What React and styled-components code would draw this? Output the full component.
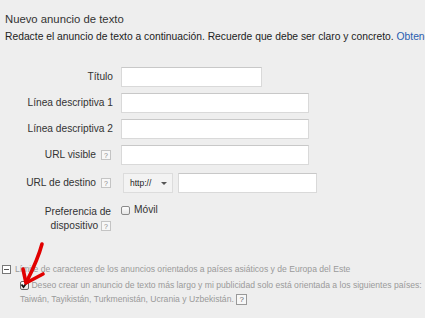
import styled, { createGlobalStyle } from "styled-components";

const GlobalStyle = createGlobalStyle`
  html, body {
    margin: 0;
    background: #eeeeee;
    font-family: "Liberation Sans", Arial, sans-serif;
    overflow: hidden;
  }
`

const Page = styled.div`
  width: 425px;
  height: 318px;
  padding-top: 12px;
  box-sizing: border-box;
  overflow: hidden;
`

const Header = styled.div`
  padding-left: 5px;
`

const Title = styled.h2`
  margin: 0;
  font-size: 11.3px;
  line-height: 14px;
  font-weight: normal;
  color: #333;
`

const Intro = styled.p`
  margin: 4px 0 0;
  font-size: 10.3px;
  line-height: 14px;
  color: #222;
  white-space: nowrap;
  overflow: hidden;
`

const Link = styled.a`
  color: #2a5db0;
  text-decoration: none;
`

const Form = styled.div`
  margin-top: 23px;
`

const Row = styled.div`
  display: grid;
  grid-template-columns: 113px 1fr;
  column-gap: 8px;
  align-items: ${(p) => (p.$top ? "start" : "center")};
  margin-top: ${(p) => p.$mt || 0}px;
`

const Label = styled.div`
  display: flex;
  justify-content: flex-end;
  align-items: center;
  gap: 5px;
  font-size: 10.2px;
  line-height: 14px;
  color: #333;
  text-align: right;
  padding-right: ${(p) => (p.$help ? 2 : 0)}px;
`

const LabelBlock = styled.div`
  font-size: 10.2px;
  line-height: 14px;
  color: #333;
  text-align: right;
  padding-right: 2px;
`

const Help = styled.span`
  display: inline-flex;
  align-items: center;
  justify-content: center;
  width: ${(p) => p.$size || 8}px;
  height: ${(p) => p.$size || 8}px;
  border: 1px solid ${(p) => (p.$dark ? "#999" : "#c4c4c4")};
  background: #f7f7f7;
  color: ${(p) => (p.$dark ? "#666" : "#888")};
  font-size: ${(p) => (p.$size ? 8 : 7)}px;
  line-height: 1;
  vertical-align: middle;
  box-sizing: content-box;
`

const TextInput = styled.div`
  width: ${(p) => p.$w}px;
  height: 20px;
  box-sizing: border-box;
  background: #fff;
  border: 1px solid #d9d9d9;
  border-top-color: #c8c8c8;
`

const Fields = styled.div`
  display: flex;
  align-items: center;
  gap: 5px;
  padding-left: 2px;
`

const Select = styled.div`
  width: 50px;
  height: 20px;
  box-sizing: border-box;
  display: flex;
  align-items: center;
  justify-content: space-between;
  padding: 0 5px 0 6px;
  background: #f3f3f3;
  border: 1px solid #dcdcdc;
  font-size: 8.5px;
  color: #222;
`

const Caret = styled.span`
  width: 0;
  height: 0;
  border-left: 3px solid transparent;
  border-right: 3px solid transparent;
  border-top: 3px solid #555;
`

const CheckLine = styled.div`
  display: flex;
  align-items: center;
  gap: 4px;
  font-size: 10.2px;
  line-height: 14px;
  color: #333;
  margin-top: -2px;
`

const Box = styled.span`
  position: relative;
  display: inline-block;
  width: 7px;
  height: 7px;
  border: 1px solid ${(p) => (p.$checked ? "#666" : "#8a8a8a")};
  border-radius: 2px;
  background: linear-gradient(#fdfdfd, #e6e6e6);
  vertical-align: middle;
  box-sizing: content-box;
`

const Extra = styled.div`
  position: relative;
  margin-top: 29px;
  padding-left: 2px;
  font-size: 8.6px;
  line-height: 14px;
  color: #9a9a9a;
`

const Heading = styled.div`
  display: flex;
  align-items: center;
  gap: 4px;
  white-space: nowrap;
`

const Toggle = styled.span`
  position: relative;
  width: 7px;
  height: 7px;
  border: 1px solid #777;
  background: #fff;
  box-sizing: content-box;

  &::after {
    content: "";
    position: absolute;
    left: 1px;
    right: 1px;
    top: 3px;
    height: 1px;
    background: #555;
  }
`

const Option = styled.div`
  padding-left: 18px;
  margin-top: 2px;
  white-space: nowrap;
`

const Arrow = styled.svg`
  position: absolute;
  left: 0;
  top: -23px;
  pointer-events: none;
`

const Check = () => (
  <svg width="9" height="9" viewBox="0 0 9 9" style={{ position: "absolute", left: -1, top: -2 }}>
    <path d="M1.5 4.5 L3.5 7 L8 1" fill="none" stroke="#111" strokeWidth="1.8" />
  </svg>
)

const App = () => {
  return (
    <Page>
      <GlobalStyle />
      <Header>
        <Title>Nuevo anuncio de texto</Title>
        <Intro>
          Redacte el anuncio de texto a continuación. Recuerde que debe ser claro y concreto.{" "}
          <Link href="#">Obtenga más información</Link>
        </Intro>
      </Header>

      <Form>
        <Row>
          <Label>Título</Label>
          <TextInput $w={141} />
        </Row>
        <Row $mt={6}>
          <Label>Línea descriptiva 1</Label>
          <TextInput $w={188} />
        </Row>
        <Row $mt={6}>
          <Label>Línea descriptiva 2</Label>
          <TextInput $w={188} />
        </Row>
        <Row $mt={6}>
          <Label $help>
            URL visible <Help>?</Help>
          </Label>
          <TextInput $w={188} />
        </Row>
        <Row $mt={8}>
          <Label $help>
            URL de destino <Help>?</Help>
          </Label>
          <Fields>
            <Select>
              http:// <Caret />
            </Select>
            <TextInput $w={139} />
          </Fields>
        </Row>
        <Row $mt={12} $top>
          <LabelBlock>
            Preferencia de
            <br />
            dispositivo <Help>?</Help>
          </LabelBlock>
          <CheckLine>
            <Box /> Móvil
          </CheckLine>
        </Row>
      </Form>

      <Extra>
        <Heading>
          <Toggle />
          Límite de caracteres de los anuncios orientados a países asiáticos y de Europa del Este
        </Heading>
        <Option>
          <Box $checked>
            <Check />
          </Box>{" "}
          Deseo crear un anuncio de texto más largo y mi publicidad solo está orientada a los siguientes países:
          <br />
          Taiwán, Tayikistán, Turkmenistán, Ucrania y Uzbekistán.{" "}
          <Help $dark $size={9}>?</Help>
        </Option>
        <Arrow width="60" height="60" viewBox="0 0 60 60">
          <path d="M42 5 Q38 20 27 42" fill="none" stroke="#e10000" strokeWidth="3.6" strokeLinecap="round" />
          <path d="M23 30 L26 44 L43 35" fill="none" stroke="#e10000" strokeWidth="3.6" strokeLinecap="round" strokeLinejoin="round" />
        </Arrow>
      </Extra>
    </Page>
  )
}

export default App
